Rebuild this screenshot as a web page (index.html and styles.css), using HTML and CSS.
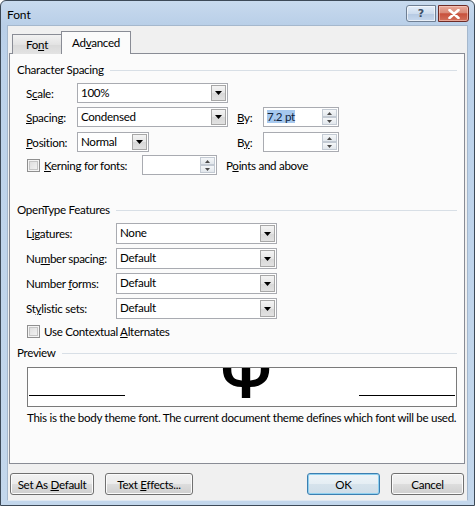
FILE: index.html
```html
<!DOCTYPE html>
<html>
<head>
<meta charset="utf-8">
<link rel="stylesheet" href="styles.css">
</head>
<body>
<div class="window">
  <div class="titlebar">
    <span class="title">Font</span>
    <div class="caption-btns">
      <span class="cbtn help">?</span>
      <span class="cbtn close">
        <svg width="12" height="10" viewBox="0 0 12 10"><path d="M1.5 1 L10.5 9 M10.5 1 L1.5 9" stroke="#fff" stroke-width="2.6" stroke-linecap="round"/></svg>
      </span>
    </div>
  </div>
  <div class="client">
    <div class="tabs">
      <span class="tab">Fo<u>n</u>t</span>
      <span class="tab active">Ad<u>v</u>anced</span>
    </div>
    <div class="panel">
      <div class="group-title"><span>Character Spacing</span></div>

      <div class="row r1">
        <span class="lbl w51">S<u>c</u>ale:</span>
        <div class="combo w151"><span class="val">100%</span><span class="arrow"><svg width="7" height="4" viewBox="0 0 7 4"><path d="M0 0H7L3.5 4Z" fill="#000"/></svg></span></div>
      </div>
      <div class="row r2">
        <span class="lbl w51"><u>S</u>pacing:</span>
        <div class="combo w151"><span class="val">Condensed</span><span class="arrow"><svg width="7" height="4" viewBox="0 0 7 4"><path d="M0 0H7L3.5 4Z" fill="#000"/></svg></span></div>
        <span class="lbl by"><u>B</u>y:</span>
        <div class="spin"><span class="val"><span class="sel">7.2 pt</span></span><span class="btns"><span class="sb"><svg width="5" height="3" viewBox="0 0 5 3"><path d="M0 3H5L2.5 0Z" fill="#4a4a4a"/></svg></span><span class="sb"><svg width="5" height="3" viewBox="0 0 5 3"><path d="M0 0H5L2.5 3Z" fill="#4a4a4a"/></svg></span></span></div>
      </div>
      <div class="row r3">
        <span class="lbl w51"><u>P</u>osition:</span>
        <div class="combo w72"><span class="val">Normal</span><span class="arrow"><svg width="7" height="4" viewBox="0 0 7 4"><path d="M0 0H7L3.5 4Z" fill="#000"/></svg></span></div>
        <span class="lbl by far">B<u>y</u>:</span>
        <div class="spin"><span class="val"></span><span class="btns"><span class="sb"><svg width="5" height="3" viewBox="0 0 5 3"><path d="M0 3H5L2.5 0Z" fill="#4a4a4a"/></svg></span><span class="sb"><svg width="5" height="3" viewBox="0 0 5 3"><path d="M0 0H5L2.5 3Z" fill="#4a4a4a"/></svg></span></span></div>
      </div>
      <div class="row r4">
        <span class="check"></span>
        <span class="lbl kern"><u>K</u>erning for fonts:</span>
        <div class="spin w75"><span class="val"></span><span class="btns"><span class="sb"><svg width="5" height="3" viewBox="0 0 5 3"><path d="M0 3H5L2.5 0Z" fill="#4a4a4a"/></svg></span><span class="sb"><svg width="5" height="3" viewBox="0 0 5 3"><path d="M0 0H5L2.5 3Z" fill="#4a4a4a"/></svg></span></span></div>
        <span class="lbl pts">P<u>o</u>ints and above</span>
      </div>

      <div class="group-title g2"><span>OpenType Features</span></div>
      <div class="row ot first">
        <span class="lbl w90">L<u>i</u>gatures:</span>
        <div class="combo w161"><span class="val">None</span><span class="arrow"><svg width="7" height="4" viewBox="0 0 7 4"><path d="M0 0H7L3.5 4Z" fill="#000"/></svg></span></div>
      </div>
      <div class="row ot">
        <span class="lbl w90">Nu<u>m</u>ber spacing:</span>
        <div class="combo w161"><span class="val">Default</span><span class="arrow"><svg width="7" height="4" viewBox="0 0 7 4"><path d="M0 0H7L3.5 4Z" fill="#000"/></svg></span></div>
      </div>
      <div class="row ot">
        <span class="lbl w90">Number <u>f</u>orms:</span>
        <div class="combo w161"><span class="val">Default</span><span class="arrow"><svg width="7" height="4" viewBox="0 0 7 4"><path d="M0 0H7L3.5 4Z" fill="#000"/></svg></span></div>
      </div>
      <div class="row ot">
        <span class="lbl w90">St<u>y</u>listic sets:</span>
        <div class="combo w161"><span class="val">Default</span><span class="arrow"><svg width="7" height="4" viewBox="0 0 7 4"><path d="M0 0H7L3.5 4Z" fill="#000"/></svg></span></div>
      </div>
      <div class="row ctx">
        <span class="check"></span>
        <span class="lbl kern">Use Contextual <u>A</u>lternates</span>
      </div>

      <div class="group-title g3"><span>Preview</span></div>
      <div class="preview">
        <span class="base-line"></span>
        <span class="glyph">Ψ</span>
        <span class="base-line"></span>
      </div>
      <div class="desc">This is the body theme font. The current document theme defines which font will be used.</div>
    </div>
    <div class="footer">
      <span class="btn b-def"><span>Set As <u>D</u>efault</span></span>
      <span class="btn b-fx"><span>Text <u>E</u>ffects...</span></span>
      <span class="spacer"></span>
      <span class="btn b-ok"><span>OK</span></span>
      <span class="btn b-cancel"><span>Cancel</span></span>
    </div>
  </div>
</div>
</body>
</html>
```

FILE: styles.css
```css
html, body {
  margin: 0;
  padding: 0;
  background: #ffffff;
}

body {
  font-family: "Lato", "Liberation Sans", sans-serif;
  font-size: 11.6px;
  letter-spacing: -0.3px;
  color: #000;
}

u {
  text-decoration: underline;
  text-underline-offset: 1px;
}

.window {
  width: 475px;
  height: 506px;
  box-sizing: border-box;
  border: 1px solid #3d4a58;
  border-radius: 6px 6px 0 0;
  background: linear-gradient(#c8daee 0px, #b9cfe8 24px, #bcd2ea 60px, #c3d7ec 100%);
  display: flex;
  flex-direction: column;
  overflow: hidden;
}

.titlebar {
  height: 24px;
  display: flex;
  align-items: flex-start;
  justify-content: space-between;
  padding: 0 5px 0 6px;
  box-sizing: border-box;
}

.title {
  font-size: 12px;
  line-height: 27px;
  letter-spacing: -0.1px;
  color: #000;
}

.caption-btns {
  display: flex;
  gap: 2px;
  padding-top: 4px;
}

.cbtn {
  height: 17px;
  box-sizing: border-box;
  display: flex;
  align-items: center;
  justify-content: center;
  border: 1px solid #6f7f93;
}

.help {
  width: 30px;
  border-radius: 3px 0 0 3px;
  background: linear-gradient(#e4eefa 0%, #cddcee 50%, #b5c9e2 51%, #c6d8ee 100%);
  box-shadow: inset 0 0 0 1px rgba(255,255,255,0.6);
  color: #3c4e66;
  font-family: "DejaVu Sans", sans-serif;
  font-weight: bold;
  font-size: 11px;
  letter-spacing: 0;
}

.close {
  width: 31px;
  border-radius: 0 3px 3px 0;
  border-color: #6e2b26;
  background: linear-gradient(#e9a99b 0%, #d98a78 45%, #c8503c 52%, #d2715c 100%);
  box-shadow: inset 0 0 0 1px rgba(255,220,210,0.5);
}

.client {
  flex: 1;
  margin: 0 6px 4px 6px;
  background: #f0f0f0;
  border: 1px solid #a5b8cd;
  border-bottom-color: #dfe8f2;
  box-sizing: border-box;
  display: flex;
  flex-direction: column;
}

.tabs {
  display: flex;
  align-items: flex-end;
  padding: 6px 0 0 4px;
  height: 28px;
  box-sizing: border-box;
  margin-bottom: -1px;
  position: relative;
  z-index: 1;
}

.tab {
  height: 20px;
  box-sizing: border-box;
  padding: 0 10px;
  border: 1px solid #898c95;
  border-bottom: none;
  background: linear-gradient(#f2f2f2, #e3e3e3 50%, #d9d9d9 51%, #e3e3e3);
  line-height: 20px;
  width: 50px;
  text-align: center;
}

.tab.active {
  height: 23px;
  width: 70px;
  margin-left: -1px;
  background: #fbfbfb;
  line-height: 21px;
}

.panel {
  margin-left: 1px;
  width: 456px;
  height: 411px;
  box-sizing: border-box;
  border: 1px solid #898c95;
  background: #fbfbfb;
  padding: 8px 7px 0 7px;
}

.group-title {
  display: flex;
  align-items: center;
  height: 16px;
  line-height: 16px;
  gap: 6px;
}

.group-title::after {
  content: "";
  flex: 1;
  height: 1px;
  background: #d8dfe6;
}

.g2 { margin-top: 27px; }
.g3 { margin-top: 6px; }

.row {
  display: flex;
  align-items: center;
  padding-left: 9px;
  height: 20px;
}

.r1 { margin-top: 5px; }
.r2 { margin-top: 4px; }
.r3 { margin-top: 5px; }
.r4 { margin-top: 3px; }

.ot { height: 21px; margin-top: 4px; }
.ot.first { margin-top: 5px; }
.ctx { height: 16px; margin-top: 4px; }

.lbl { white-space: nowrap; }
.w51 { width: 51px; }
.w90 { width: 90px; }
.by { width: 26px; margin-left: 9px; }
.by.far { margin-left: 88px; }
.kern { margin-left: 4px; width: 98px; }
.pts { margin-left: 9px; }

.combo {
  display: flex;
  height: 20px;
  box-sizing: border-box;
  border: 1px solid #a9abb1;
  background: #fff;
}

.ot .combo { height: 21px; }

.w151 { width: 151px; }
.w72 { width: 72px; }
.w161 { width: 161px; }

.combo .val {
  flex: 1;
  padding-left: 3px;
  line-height: 18px;
}

.combo .arrow {
  width: 15px;
  margin: 1px;
  box-sizing: border-box;
  border: 1px solid #a7a7a7;
  background: linear-gradient(#f4f4f4, #e6e6e6 50%, #d8d8d8 51%, #e2e2e2);
  display: flex;
  align-items: center;
  justify-content: center;
}

.spin {
  display: flex;
  width: 76px;
  height: 20px;
  box-sizing: border-box;
  border: 1px solid #a9abb1;
  background: #fff;
}

.spin.w75 { width: 75px; }

.spin .val {
  flex: 1;
  padding-left: 3px;
  line-height: 18px;
}

.sel {
  background: #a6c8ee;
  color: #10233d;
}

.spin .btns {
  width: 15px;
  margin: 1px;
  display: flex;
  flex-direction: column;
}

.sb {
  flex: 1;
  box-sizing: border-box;
  border: 1px solid #c3cad3;
  background: linear-gradient(#f5f7f9, #e2e7ec);
  display: flex;
  align-items: center;
  justify-content: center;
}

.check {
  width: 13px;
  height: 13px;
  margin-left: 1px;
  box-sizing: border-box;
  border: 1px solid #8f8f8f;
  background: linear-gradient(135deg, #dadada, #f6f6f6);
  box-shadow: inset 0 0 0 1px #f4f4f4, inset 0 0 0 2px #c5c5c5;
}

.preview {
  margin: 6px 0 0 10px;
  width: 430px;
  height: 40px;
  box-sizing: border-box;
  border: 1px solid #7a7a7a;
  background: #fff;
  display: flex;
  align-items: flex-end;
  justify-content: space-between;
  padding: 0 1px;
  overflow: hidden;
}

.base-line {
  width: 96px;
  height: 1px;
  background: #000;
  margin-bottom: 10px;
}

.glyph {
  font-family: "Lato", sans-serif;
  font-weight: bold;
  font-size: 62px;
  line-height: 62px;
  height: 62px;
  letter-spacing: 0;
  margin-bottom: 1px;
  margin-left: 8px;
}

.desc {
  margin: 3px 0 0 10px;
  line-height: 16px;
  white-space: nowrap;
}

.footer {
  display: flex;
  align-items: center;
  padding: 9px 3px 0 2px;
  gap: 11px;
}

.spacer { flex: 1; }

.btn {
  height: 22px;
  box-sizing: border-box;
  border: 1px solid #707070;
  border-radius: 3px;
  background: linear-gradient(#f2f2f2 0%, #ebebeb 50%, #dddddd 51%, #cfcfcf 100%);
  box-shadow: inset 0 0 0 1px #fbfbfb;
  display: flex;
  align-items: center;
  justify-content: center;
  white-space: nowrap;
}

.b-def { width: 84px; }
.b-fx { width: 88px; }
.b-ok {
  width: 73px;
  border-color: #3c7fb1;
  background: linear-gradient(#eef4f8 0%, #e5eef4 50%, #d6e3ec 51%, #cfdde8 100%);
  box-shadow: inset 0 0 0 1px #8fd0ef;
}
.b-cancel { width: 73px; }
```
